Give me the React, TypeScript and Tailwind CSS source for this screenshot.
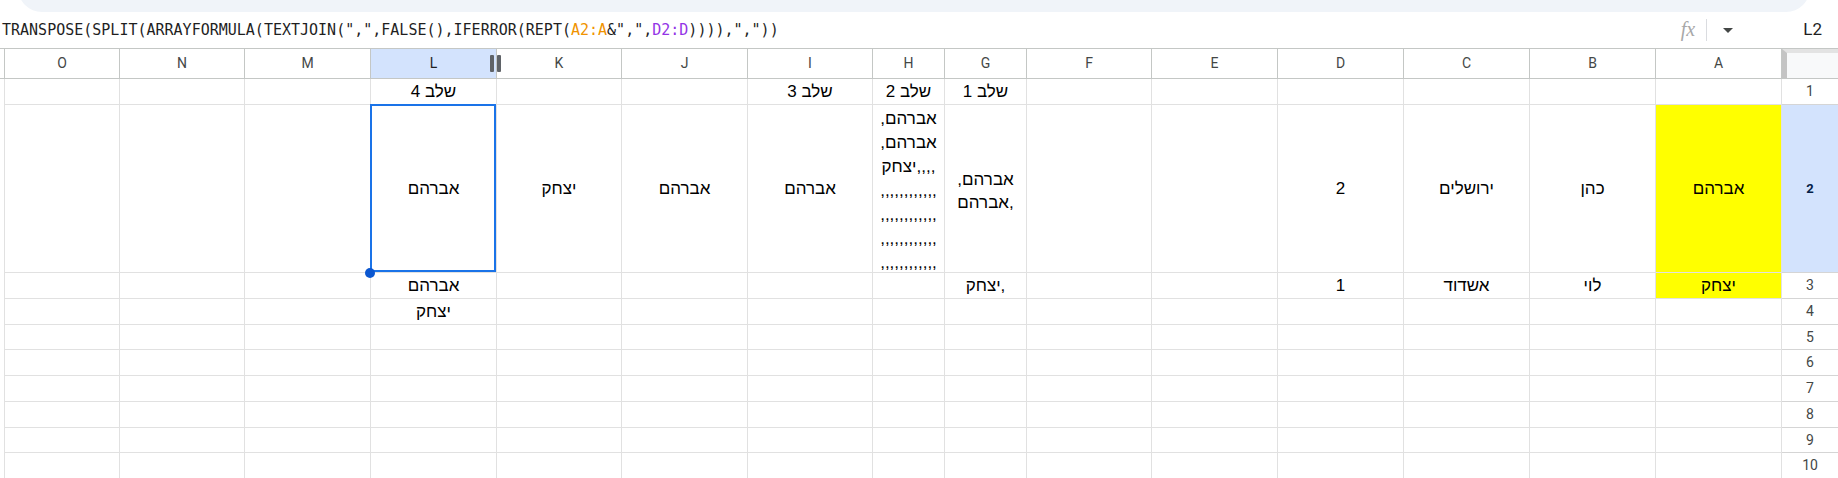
import type { ReactNode } from 'react';

// columns are laid out left to right as they show on screen (RTL sheet)
const cols = [
  { k: 'O', w: 'w-[115px]' },
  { k: 'N', w: 'w-[125px]' },
  { k: 'M', w: 'w-[126px]' },
  { k: 'L', w: 'w-[126px]' },
  { k: 'K', w: 'w-[125px]' },
  { k: 'J', w: 'w-[126px]' },
  { k: 'I', w: 'w-[125px]' },
  { k: 'H', w: 'w-[72px]' },
  { k: 'G', w: 'w-[82px]' },
  { k: 'F', w: 'w-[125px]' },
  { k: 'E', w: 'w-[126px]' },
  { k: 'D', w: 'w-[126px]' },
  { k: 'C', w: 'w-[126px]' },
  { k: 'B', w: 'w-[126px]' },
  { k: 'A', w: 'w-[126px]' },
];

const rowHeights = [
  'h-[26px]',
  'h-[168px]',
  'h-[26px]',
  'h-[26px]',
  'h-[25px]',
  'h-[26px]',
  'h-[26px]',
  'h-[26px]',
  'h-[25px]',
  'h-[26px]',
];

const Lines = ({ lines }: { lines: string[] }) => (
  <div className="flex flex-col items-center leading-[24px] pt-[5px]">
    {lines.map((l, i) => (
      <div key={i} dir="ltr" className="whitespace-nowrap">
        {l}
      </div>
    ))}
  </div>
);

const data: Record<number, Record<string, ReactNode>> = {
  1: { L: 'שלב 4', I: 'שלב 3', H: 'שלב 2', G: 'שלב 1' },
  2: {
    L: 'אברהם',
    K: 'יצחק',
    J: 'אברהם',
    I: 'אברהם',
    H: (
      <Lines
        lines={[
          ',אברהם',
          ',אברהם',
          'יצחק,,,,',
          ',,,,,,,,,,,,',
          ',,,,,,,,,,,,',
          ',,,,,,,,,,,,',
          ',,,,,,,,,,,,',
        ]}
      />
    ),
    G: (
      <div className="flex flex-col items-center leading-[23px] pt-[4px]">
        <div dir="ltr">,אברהם</div>
        <div dir="ltr">אברהם,</div>
      </div>
    ),
    D: '2',
    C: 'ירושלים',
    B: 'כהן',
    A: 'אברהם',
  },
  3: { L: 'אברהם', G: 'יצחק,', D: '1', C: 'אשדוד', B: 'לוי', A: 'יצחק' },
  4: { L: 'יצחק' },
};

export default function App() {
  return (
    <div className="w-[1838px] h-[478px] overflow-hidden bg-white relative">
      {/* bottom of the toolbar */}
      <div className="h-[12px] overflow-hidden">
        <div className="h-[36px] -mt-[24px] ml-[18px] mr-[28px] rounded-b-[24px] bg-[#f0f4f9]" />
      </div>

      {/* formula bar */}
      <div className="h-[37px] flex items-center border-b border-[#c4c7c5]">
        <div className="w-[1670px] overflow-hidden whitespace-nowrap pl-[2px] font-['DejaVu_Sans_Mono','Liberation_Mono',monospace] text-[15px] text-[#1f1f1f]">
          TRANSPOSE(SPLIT(ARRAYFORMULA(TEXTJOIN(&quot;,&quot;,FALSE(),IFERROR(REPT(
          <span className="text-[#f09300]">A2:A</span>&amp;&quot;,&quot;,
          <span className="text-[#9334e6]">D2:D</span>)))),&quot;,&quot;))
        </div>
        <div className="w-[36px] flex justify-center font-['Liberation_Serif',serif] italic text-[20px] text-[#a8a8a8] -mt-[2px]">
          fx
        </div>
        <div className="w-px h-[22px] bg-[#dadce0]" />
        <div className="w-[42px] flex justify-center">
          <div className="w-0 h-0 border-l-[5px] border-r-[5px] border-t-[5px] border-l-transparent border-r-transparent border-t-[#444746]" />
        </div>
        <div className="flex-1 text-right pr-[16px] font-['Roboto',sans-serif] text-[17px] text-[#1f1f1f]">
          L2
        </div>
      </div>

      {/* column headers */}
      <div className="flex h-[30px] border-b border-[#c4c7c5] font-['Roboto',sans-serif] text-[14px] text-[#444746]">
        <div className="w-[5px] border-r border-[#c4c7c5]" />
        {cols.map((c) => (
          <div
            key={c.k}
            className={`${c.w} relative flex items-center justify-center border-r border-[#c4c7c5] ${
              c.k === 'L' ? 'bg-[#d3e3fd] text-[#1f1f1f]' : ''
            }`}
          >
            {c.k}
            {c.k === 'L' && (
              <div className="absolute left-[119px] top-[6px] z-10 flex gap-[3px]">
                <div className="w-[4px] h-[17px] rounded-[1px] bg-[#5f6368]" />
                <div className="w-[4px] h-[17px] rounded-[1px] bg-[#5f6368]" />
              </div>
            )}
          </div>
        ))}
        <div className="flex-1 bg-[#f8f9fa] border-l-[5px] border-[#c4c4c4] border-t-[4px] border-t-[#e3e3e3]" />
      </div>

      {/* grid */}
      <div className="font-['Liberation_Sans','DejaVu_Sans',sans-serif] text-[17px] text-black">
        {rowHeights.map((h, i) => {
          const n = i + 1;
          const row = data[n] || {};
          return (
            <div key={n} className={`flex ${h}`}>
              <div className="w-[5px] border-r border-[#e1e1e1]" />
              {cols.map((c) => {
                const yellow = c.k === 'A' && (n === 2 || n === 3);
                const selected = c.k === 'L' && n === 2;
                return (
                  <div
                    key={c.k}
                    className={`${c.w} relative flex items-center justify-center border-r border-b border-[#e1e1e1] ${
                      yellow ? 'bg-[#ffff00]' : ''
                    } ${n === 2 && c.k === 'H' ? 'overflow-hidden' : ''}`}
                  >
                    {row[c.k]}
                    {selected && (
                      <>
                        <div className="absolute -top-[1px] -left-[1px] right-0 bottom-0 border-2 border-[#1a73e8] z-10" />
                        <div className="absolute -left-[6px] -bottom-[6px] w-[10px] h-[10px] rounded-full bg-[#0b57d0] z-20" />
                      </>
                    )}
                  </div>
                );
              })}
              <div
                className={`flex-1 flex items-center justify-center border-b border-[#d5d5d5] font-['Roboto',sans-serif] ${
                  n === 2
                    ? 'bg-[#d3e3fd] text-[13px] font-bold text-[#041e49]'
                    : 'text-[14px] text-[#444746]'
                }`}
              >
                {n}
              </div>
            </div>
          );
        })}
      </div>
    </div>
  );
}
